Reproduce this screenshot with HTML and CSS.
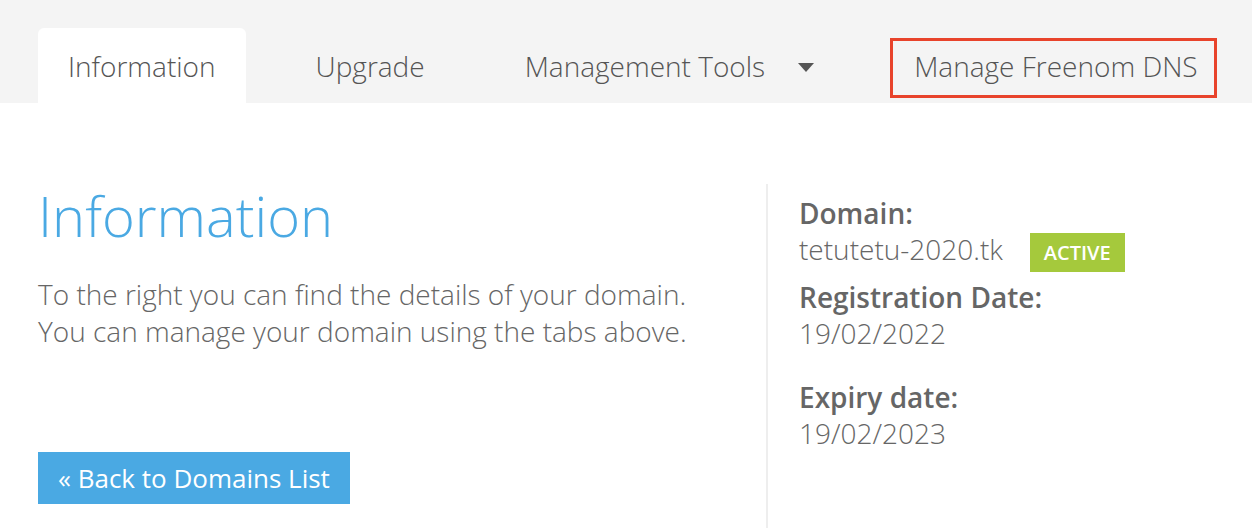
FILE: index.html
```html
<!DOCTYPE html>
<html lang="en">
<head>
<meta charset="utf-8">
<title>Domain Information</title>
<link rel="stylesheet" href="styles.css">
</head>
<body>
<nav class="tabbar">
  <a class="tab tab-active">Information</a>
  <a class="tab">Upgrade</a>
  <a class="tab tab-dropdown">Management Tools <span class="caret"></span></a>
  <a class="tab tab-marked">Manage Freenom DNS<span class="mark"></span></a>
</nav>
<main class="content">
  <section class="intro">
    <h1 class="title">Information</h1>
    <p class="lead">To the right you can find the details of your domain.<br>You can manage your domain using the tabs above.</p>
    <a class="btn-back">« Back to Domains List</a>
  </section>
  <aside class="details">
    <div class="label">Domain:</div>
    <div class="value value-domain"><span>tetutetu-2020.tk</span><span class="badge">ACTIVE</span></div>
    <div class="label">Registration Date:</div>
    <div class="value">19/02/2022</div>
    <div class="label label-gap">Expiry date:</div>
    <div class="value">19/02/2023</div>
  </aside>
</main>
</body>
</html>
```
FILE: styles.css
```css
* { box-sizing: border-box; }
html, body { margin: 0; padding: 0; }
body {
  font-family: "Open Sans", "Liberation Sans", sans-serif;
  color: #666;
  background: #fff;
  width: 1252px;
  height: 528px;
  overflow: hidden;
}
.tabbar {
  display: flex;
  align-items: flex-end;
  gap: 40px;
  height: 103px;
  padding-left: 38px;
  background: #f4f4f4;
}
.tab {
  position: relative;
  display: flex;
  align-items: center;
  height: 75px;
  padding: 0 30px;
  font-size: 28px;
  font-weight: 300;
  color: #555;
  border-radius: 6px 6px 0 0;
}
.tab-active { background: #fff; }
.caret {
  display: inline-block;
  width: 0; height: 0;
  margin-left: 33px;
  margin-top: 3px;
  border-left: 8px solid transparent;
  border-right: 8px solid transparent;
  border-top: 9px solid #555;
}
.mark {
  position: absolute;
  left: 6px; right: 11px;
  top: 10px; bottom: 5px;
  border: 3px solid #e8432b;
}
.content {
  display: grid;
  grid-template-columns: 728px 1fr;
  height: 425px;
  padding: 81px 0 0 38px;
}
.title {
  margin: 0;
  font-size: 56px;
  font-weight: 300;
  line-height: 62px;
  color: #4aa9e3;
}
.lead {
  margin: 30px 0 0;
  font-size: 28px;
  font-weight: 300;
  line-height: 37px;
  color: #666;
}
.btn-back {
  display: inline-block;
  margin-top: 102px;
  padding: 0 20px;
  height: 52px;
  line-height: 52px;
  background: #4aa9e3;
  color: #fff;
  font-size: 26px;
  font-weight: 400;
}
.details {
  border-left: 2px solid #eeeeee;
  padding: 11px 0 0 31px;
}
.label {
  font-size: 28px;
  font-weight: 600;
  line-height: 36px;
  color: #666;
}
.label-gap { margin-top: 28px; }
.value {
  font-size: 28px;
  font-weight: 300;
  line-height: 36px;
  color: #666;
}
.value-domain {
  display: flex;
  align-items: flex-start;
  margin-bottom: 7px;
}
.badge {
  margin-top: 2px;
  margin-left: 27px;
  height: 39px;
  line-height: 39px;
  padding: 0 14px;
  background: #a5c93c;
  color: #fff;
  font-size: 20px;
  font-weight: 600;
}
```
